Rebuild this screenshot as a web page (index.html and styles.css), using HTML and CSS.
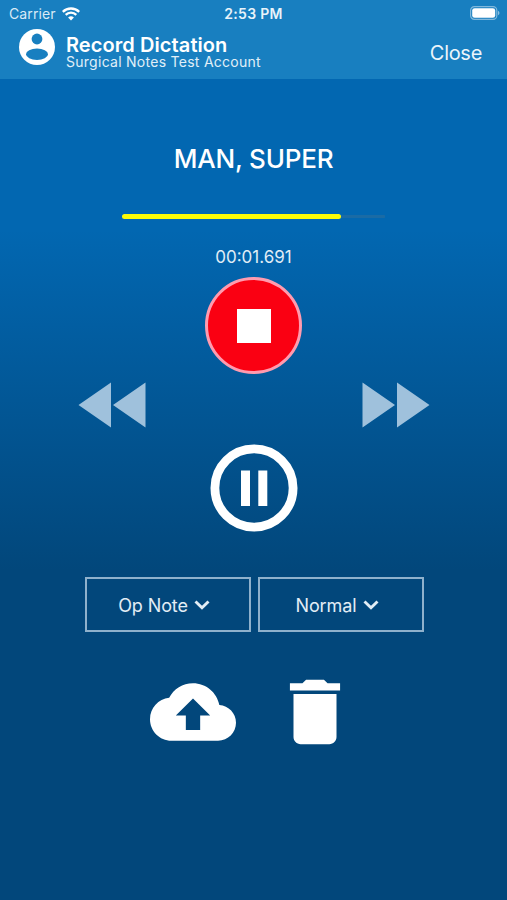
FILE: index.html
```html
<!DOCTYPE html>
<html lang="en">
<head>
<meta charset="utf-8">
<title>Record Dictation</title>
<link rel="stylesheet" href="styles.css">
</head>
<body>
<div class="app">
  <header class="header">
    <div class="status">
      <div class="carrier"><span>Carrier</span>
        <svg width="18" height="14" viewBox="0 0 18 14" fill="none" stroke="#fff" stroke-width="2.3"><path d="M.8 4.9a11.6 11.6 0 0 1 16.4 0M3.7 7.9a7.5 7.5 0 0 1 10.6 0"/><path d="M9 13.5 6.1 10.6a4.1 4.1 0 0 1 5.8 0z" fill="#fff" stroke="none"/></svg>
      </div>
      <div class="clock">2:53 PM</div>
      <svg class="battery" width="30" height="15" viewBox="0 0 30 15"><rect x=".6" y=".6" width="26.2" height="12.8" rx="3.8" fill="none" stroke="#fff" stroke-opacity=".45" stroke-width="1.2"/><rect x="2.2" y="2.2" width="23" height="9.6" rx="2.4" fill="#fff"/><path d="M28 4.8c2 .8 2 3.6 0 4.4z" fill="#fff" fill-opacity=".5"/></svg>
    </div>
    <div class="nav">
      <svg class="avatar" width="36" height="36" viewBox="0 0 36 36"><circle cx="18" cy="18" r="18" fill="#fff"/><circle cx="18" cy="10" r="5.4" fill="#187fc0"/><ellipse cx="18" cy="25.2" rx="11" ry="5.7" fill="#187fc0"/></svg>
      <div class="titles">
        <h1>Record Dictation</h1>
        <p>Surgical Notes Test Account</p>
      </div>
      <div class="close">Close</div>
    </div>
  </header>
  <main class="main">
    <h2 class="patient">MAN, SUPER</h2>
    <div class="progress"><div class="progress-fill"></div></div>
    <div class="time">00:01.691</div>
    <div class="stop"><div class="stop-square"></div></div>
    <div class="seek">
      <svg width="68" height="46" viewBox="0 0 68 46" fill="#9fc1dc"><path d="M.5 23 33 .5v45zM35 23 67.5.5v45z"/></svg>
      <svg width="68" height="46" viewBox="0 0 68 46" fill="#9fc1dc"><path d="M33 23 .5.5v45zM67.5 23 35 .5v45z"/></svg>
    </div>
    <svg class="pause" width="88" height="88" viewBox="0 0 88 88"><circle cx="44" cy="44" r="39.1" fill="none" stroke="#fff" stroke-width="8.8"/><path d="M31 26.5h9v35.5h-9zM48.3 26.5h9v35.5h-9z" fill="#fff"/></svg>
    <div class="selects">
      <div class="select"><span>Op Note</span><svg width="16" height="10" viewBox="0 0 16 10" fill="none" stroke="#e2edf5" stroke-width="2.9"><path d="m1.5 1.5 6.5 6.3 6.5-6.3"/></svg></div>
      <div class="select"><span>Normal</span><svg width="16" height="10" viewBox="0 0 16 10" fill="none" stroke="#e2edf5" stroke-width="2.9"><path d="m1.5 1.5 6.5 6.3 6.5-6.3"/></svg></div>
    </div>
    <div class="actions">
      <svg width="86" height="86" viewBox="0 0 24 24" fill="#fff"><path d="M19.35 10.04C18.67 6.59 15.64 4 12 4 9.11 4 6.6 5.64 5.35 8.04 2.34 8.36 0 10.91 0 14c0 3.31 2.69 6 6 6h13c2.76 0 5-2.24 5-5 0-2.64-2.05-4.78-4.65-4.96zM14 13v4h-4v-4H7.2L12 8.2l4.8 4.8z"/></svg>
      <svg width="86" height="86" viewBox="0 0 24 24" fill="#fff"><path d="M6 19c0 1.1.9 2 2 2h8c1.1 0 2-.9 2-2V7H6v12zM19 4h-3.5l-1-1h-5l-1 1H5v2h14V4z"/></svg>
    </div>
  </main>
</div>
</body>
</html>
```
FILE: styles.css
```css
* { box-sizing: border-box; }
body {
  margin: 0;
  font-family: Inter, "Liberation Sans", sans-serif;
  color: #fff;
}
h1, h2, p { margin: 0; }
svg { display: block; flex: none; }
.app {
  width: 507px;
  height: 900px;
  overflow: hidden;
  background: linear-gradient(#0267b1 230px, #02477b 570px);
}
.header {
  height: 79px;
  background: #187fc0;
}
.status {
  display: grid;
  grid-template-columns: 1fr auto 1fr;
  align-items: center;
  height: 27px;
  padding: 0 7px 0 9px;
}
.carrier {
  display: flex;
  align-items: center;
  gap: 6px;
  font-size: 14px;
  letter-spacing: 0.1px;
  color: #d9eaf6;
}
.clock {
  margin-right: 2px;
  font-size: 14px;
  letter-spacing: 0.3px;
  font-weight: 600;
  color: #e8f3fa;
}
.battery { justify-self: end; }
.nav {
  display: flex;
  align-items: flex-start;
  height: 52px;
  padding: 2px 25px 0 19px;
}
.titles { margin: 7px 0 0 11px; }
.titles h1 {
  font-size: 20px;
  line-height: 19px;
  letter-spacing: 0.08px;
  font-weight: 600;
  white-space: nowrap;
}
.titles p {
  font-size: 14px;
  line-height: 14px;
  letter-spacing: 0.27px;
  color: #e0eff8;
  white-space: nowrap;
}
.close {
  margin: 12px 0 0 auto;
  font-size: 20px;
  line-height: 25px;
  letter-spacing: -0.3px;
  color: #eaf5fb;
}
.main {
  display: flex;
  flex-direction: column;
  align-items: center;
}
.patient {
  margin-top: 64px;
  font-size: 26px;
  line-height: 32px;
  letter-spacing: -0.2px;
  font-weight: 500;
}
.progress {
  width: 263px;
  height: 5px;
  margin-top: 39px;
  border-radius: 3px;
  background: linear-gradient(#1a6ba5, #1a6ba5) center / 100% 3px no-repeat;
}
.progress-fill {
  width: 219px;
  height: 5px;
  border-radius: 3px;
  background: #fbfb08;
}
.time {
  margin-top: 28px;
  font-size: 17px;
  line-height: 20px;
  color: #e0edf6;
}
.stop {
  display: flex;
  align-items: center;
  justify-content: center;
  width: 97px;
  height: 97px;
  margin-top: 10px;
  border: 3px solid #ff9baf;
  border-radius: 50%;
  background: #fa0012;
}
.stop-square {
  width: 34px;
  height: 34px;
  background: #fff;
}
.seek {
  display: flex;
  justify-content: space-between;
  width: 352px;
  margin: 8px 0 0 1px;
}
.pause { margin-top: 16px; }
.selects {
  display: flex;
  gap: 7px;
  margin: 45px 0 0 1px;
}
.select {
  display: flex;
  align-items: center;
  justify-content: center;
  gap: 6px;
  width: 166px;
  height: 55px;
  padding: 1px 7px 0 0;
  border: 2px solid #8fb1cc;
  font-size: 18px;
  letter-spacing: -0.1px;
  color: #e2edf5;
}
.actions {
  display: flex;
  gap: 36px;
  margin: 37px 0 0 1px;
}
```
